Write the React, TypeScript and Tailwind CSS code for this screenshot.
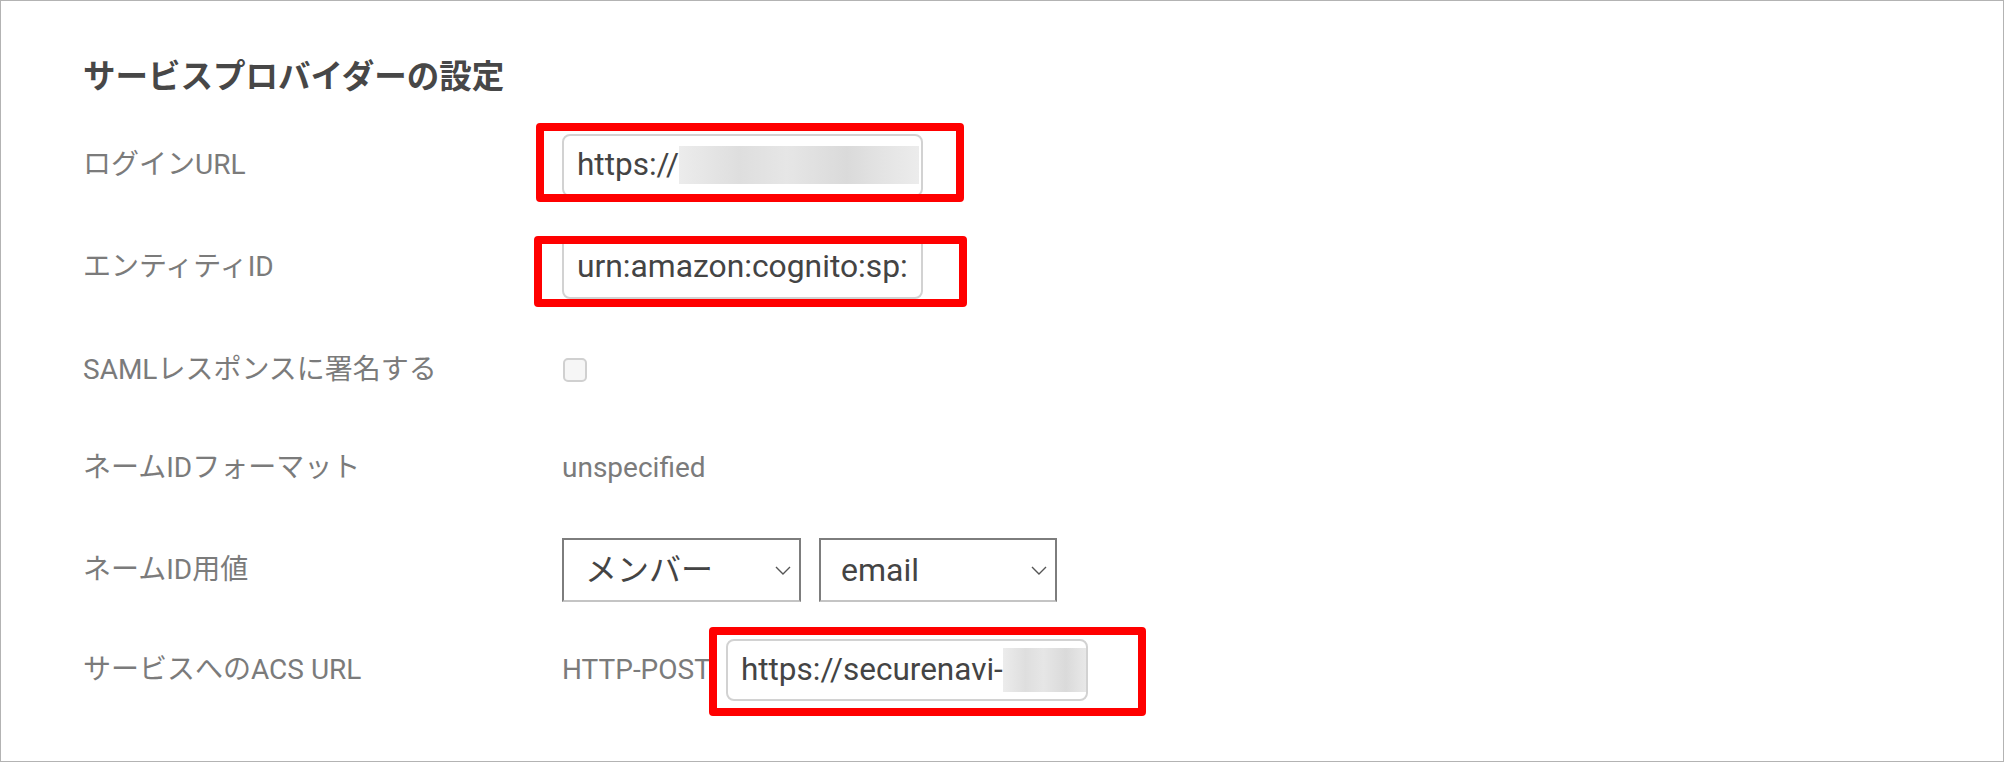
import React from "react";

const FONT = { fontFamily: 'Roboto, "Noto Sans CJK JP", sans-serif' };

function Blur({ w, h }: { w: number; h: number }) {
  return (
    <span
      className="inline-block align-middle shrink-0 bg-[linear-gradient(90deg,#ececec,#dedede_25%,#e6e6e6_45%,#dadada_70%,#e4e4e4_85%,#ececec)]"
      style={{ width: w, height: h }}
    />
  );
}

function Chevron() {
  return (
    <svg width="16" height="9" viewBox="0 0 16 9" className="shrink-0">
      <polyline points="1,1 8,8 15,1" fill="none" stroke="#555" strokeWidth="1.4" />
    </svg>
  );
}

function Row({ label, h, children }: { label: string; h: number; children?: React.ReactNode }) {
  return (
    <div className="flex items-center" style={{ height: h }}>
      <div className="w-[479px] shrink-0 text-[28px] text-[#7b7b7b] leading-none">{label}</div>
      <div className="flex items-center">{children}</div>
    </div>
  );
}

export default function App() {
  return (
    <div className="w-[2004px] h-[762px] border border-[#b3b3b3] bg-white pl-[82px] pt-[56px] overflow-hidden" style={FONT}>
      <h1 className="text-[32.5px] leading-[40px] font-bold text-[#474747] mb-[17px]">サービスプロバイダーの設定</h1>

      <Row label="ログインURL" h={102}>
        <div className="relative">
          <div className="w-[361px] h-[63px] border-2 border-[#d2d2d2] rounded-[8px] pl-[13px] flex items-center overflow-hidden whitespace-nowrap text-[31.5px] text-[#444]">
            <span>https://</span>
            <Blur w={240} h={38} />
          </div>
          <div className="absolute -left-[26px] -top-[11px] -right-[41px] -bottom-[5px] border-[8px] border-[#ff0000] rounded-[4px]" />
        </div>
      </Row>

      <Row label="エンティティID" h={102}>
        <div className="relative">
          <div className="w-[361px] h-[63px] border-2 border-[#d2d2d2] rounded-[8px] pl-[13px] flex items-center overflow-hidden whitespace-nowrap text-[31.8px] text-[#444]">
            <span>urn:amazon:cognito:sp:</span>
          </div>
          <div className="absolute -left-[28px] top-0 -right-[44px] -bottom-[8px] border-[8px] border-[#ff0000] rounded-[4px]" />
        </div>
      </Row>

      <Row label="SAMLレスポンスに署名する" h={104}>
        <div className="ml-px w-[24px] h-[24px] rounded-[5px] border-2 border-[#d0d0d0] bg-[#f6f6f6]" />
      </Row>

      <Row label="ネームIDフォーマット" h={92}>
        <span className="text-[28px] text-[#7b7b7b] leading-none">unspecified</span>
      </Row>

      <Row label="ネームID用値" h={112}>
        <div className="flex gap-[18px]">
          <div className="w-[239px] h-[64px] border-2 border-[#7d7d7d] border-b-[#c4c4c4] flex items-center justify-between pl-[21px] pr-[8px] text-[32px] text-[#444]">
            <span>メンバー</span>
            <Chevron />
          </div>
          <div className="w-[238px] h-[64px] border-2 border-[#7d7d7d] border-b-[#c4c4c4] flex items-center justify-between pl-[20px] pr-[8px] text-[32px] text-[#444]">
            <span>email</span>
            <Chevron />
          </div>
        </div>
      </Row>

      <Row label="サービスへのACS URL" h={88}>
        <div className="flex items-center gap-[15px]">
          <span className="text-[28px] text-[#7b7b7b] leading-none">HTTP-POST</span>
          <div className="relative">
            <div className="w-[362px] h-[62px] border-2 border-[#d2d2d2] rounded-[8px] pl-[13px] flex items-center overflow-hidden whitespace-nowrap text-[31.5px] text-[#444]">
              <span>https://securenavi-</span>
              <Blur w={90} h={44} />
            </div>
            <div className="absolute -left-[17px] -top-[12px] -right-[58px] -bottom-[15px] border-[8px] border-[#ff0000] rounded-[4px]" />
          </div>
        </div>
      </Row>
    </div>
  );
}
